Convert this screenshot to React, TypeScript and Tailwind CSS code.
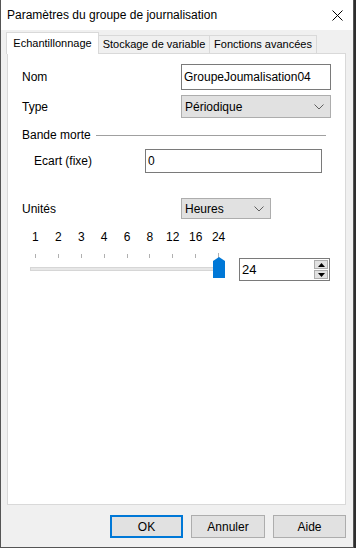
import React from 'react';

const font = { fontFamily: '"Liberation Sans", Arial, sans-serif' };

const Chevron = () => (
  <svg width="10" height="6" viewBox="0 0 10 6" className="text-[#606060]">
    <path d="M0.5 0.5 L5 5 L9.5 0.5" fill="none" stroke="currentColor" strokeWidth="1" />
  </svg>
);

const ticks = ['1', '2', '3', '4', '6', '8', '12', '16', '24'];

const App = () => {
  return (
    <div className="w-[356px] h-[548px] bg-[#2e2e2e] text-[12px] text-black" style={font}>
      <div className="w-[354px] h-[548px] bg-[#f0f0f0] border-x border-b border-[#555555] flex flex-col">
        {/* Title bar */}
        <div className="h-[30px] bg-white flex items-center justify-between pl-[6px] pr-[10px]">
          <span className="text-[12px] whitespace-nowrap">Paramètres du groupe de journalisation</span>
          <svg width="11" height="11" viewBox="0 0 11 11">
            <path d="M0.5 0.5 L10.5 10.5 M10.5 0.5 L0.5 10.5" stroke="#000" strokeWidth="1" />
          </svg>
        </div>

        {/* Tabs */}
        <div className="flex items-end mt-[2px] ml-[5px] h-[22px] relative z-10 text-[11px] whitespace-nowrap">
          <div className="w-[93px] h-[22px] bg-white border border-b-0 border-[#d9d9d9] flex items-center justify-center">
            Echantillonnage
          </div>
          <div className="w-[111px] h-[19px] bg-[#f0f0f0] border border-l-0 border-[#d9d9d9] flex items-center justify-center">
            Stockage de variable
          </div>
          <div className="w-[107px] h-[19px] bg-[#f0f0f0] border border-l-0 border-[#d9d9d9] flex items-center justify-center">
            Fonctions avancées
          </div>
        </div>

        {/* Panel */}
        <div className="ml-[6px] w-[339px] h-[452px] -mt-px bg-white border border-[#d9d9d9] flex flex-col pl-[14px]">
          <div className="flex items-center mt-[10px] h-[26px]">
            <span className="w-[159px]">Nom</span>
            <div className="w-[150px] h-[26px] border border-[#7a7a7a] flex items-center pl-[2px]">GroupeJoumalisation04</div>
          </div>
          <div className="flex items-center mt-[5px] h-[23px]">
            <span className="w-[159px]">Type</span>
            <div className="w-[150px] h-[23px] bg-[#e1e1e1] border border-[#adadad] flex items-center justify-between pl-[3px] pr-[6px]">
              <span>Périodique</span>
              <Chevron />
            </div>
          </div>
          <div className="flex items-center mt-[8px] h-[18px] pr-[19px]">
            <span>Bande morte</span>
            <div className="flex-1 h-px bg-[#a0a0a0] ml-[5px]" />
          </div>
          <div className="flex items-center mt-[5px] h-[24px] pl-[12px]">
            <span className="w-[111px]">Ecart (fixe)</span>
            <div className="w-[177px] h-[24px] border border-[#7a7a7a] flex items-center pl-[2px]">0</div>
          </div>
          <div className="flex items-center mt-[25px] h-[21px]">
            <span className="w-[159px]">Unités</span>
            <div className="w-[90px] h-[21px] bg-[#e1e1e1] border border-[#adadad] flex items-center justify-between pl-[3px] pr-[6px]">
              <span>Heures</span>
              <Chevron />
            </div>
          </div>

          {/* Slider */}
          <div className="flex mt-[10px] h-[16px] items-center pl-[2px]">
            {ticks.map((t) => (
              <span key={t} className="w-[22.9px] text-center text-[12px]">{t}</span>
            ))}
          </div>
          <div className="flex mt-[8px]">
            <div className="relative w-[210px] h-[26px]">
              <div className="absolute left-[2px] top-0 w-[210px] flex">
                {ticks.map((t, i) => (
                  <div key={t} className="w-[22.9px] flex justify-center">
                    <div className={i === 8 ? 'w-px h-[6px] bg-[#b0b0b0]' : 'w-px h-[4px] bg-[#b0b0b0] mt-[1px]'} />
                  </div>
                ))}
              </div>
              <div className="absolute left-[8px] top-[14px] w-[191px] h-[4px] bg-[#e7e7e7] border border-[#d6d6d6]" />
              <svg className="absolute left-[191px] top-[4px]" width="12" height="21" viewBox="0 0 12 21">
                <path d="M0 4 L6 0 L12 4 L12 21 L0 21 Z" fill="#0078d7" />
              </svg>
            </div>
            <div className="ml-[7px] mt-[5px] w-[91px] h-[23px] border border-[#7a7a7a] flex">
              <div className="flex-1 flex items-center pl-[2px] text-[13px]">24</div>
              <div className="w-[16px] flex flex-col gap-px p-px">
                <div className="flex-1 bg-[#e1e1e1] border border-[#adadad] flex items-center justify-center">
                  <svg width="7" height="4" viewBox="0 0 7 4"><path d="M0 4 L3.5 0 L7 4 Z" fill="#000" /></svg>
                </div>
                <div className="flex-1 bg-[#e1e1e1] border border-[#adadad] flex items-center justify-center">
                  <svg width="7" height="4" viewBox="0 0 7 4"><path d="M0 0 L3.5 4 L7 0 Z" fill="#000" /></svg>
                </div>
              </div>
            </div>
          </div>
        </div>

        {/* Buttons */}
        <div className="flex justify-end gap-[8px] mt-[10px] pr-[7px]">
          <button className="w-[73px] h-[23px] bg-[#e1e1e1] border-2 border-[#0078d7]">OK</button>
          <button className="w-[74px] h-[23px] bg-[#e1e1e1] border border-[#adadad]">Annuler</button>
          <button className="w-[73px] h-[23px] bg-[#e1e1e1] border border-[#adadad]">Aide</button>
        </div>
      </div>
    </div>
  );
};

export default App;
